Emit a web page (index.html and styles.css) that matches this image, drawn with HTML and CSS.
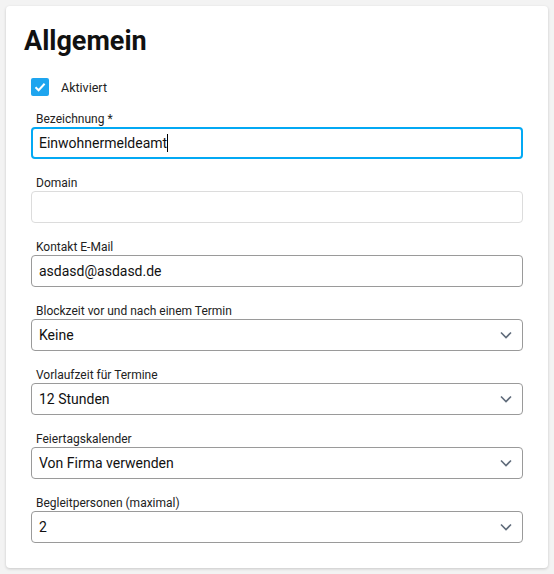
FILE: index.html
```html
<!DOCTYPE html>
<html lang="de">
<head>
<meta charset="utf-8">
<link rel="stylesheet" href="styles.css">
</head>
<body>
<div class="card">
  <h1 class="title">Allgemein</h1>
  <div class="form">
    <label class="check">
      <span class="box"><svg width="14" height="14" viewBox="0 0 14 14"><path d="M2.5 7.2 L5.6 10.2 L11.6 3.8" fill="none" stroke="#fff" stroke-width="2"/></svg></span>
      <span class="check-label">Aktiviert</span>
    </label>
    <div class="field">
      <div class="label">Bezeichnung *</div>
      <div class="input focus">Einwohnermeldeamt<span class="caret"></span></div>
    </div>
    <div class="field">
      <div class="label">Domain</div>
      <div class="input light"></div>
    </div>
    <div class="field">
      <div class="label">Kontakt E-Mail</div>
      <div class="input">asdasd@asdasd.de</div>
    </div>
    <div class="field">
      <div class="label">Blockzeit vor und nach einem Termin</div>
      <div class="input select">Keine<svg class="chev" width="12" height="8" viewBox="0 0 12 8"><path d="M1 1.5 L6 6.5 L11 1.5" fill="none" stroke="#5f6b7a" stroke-width="1.6"/></svg></div>
    </div>
    <div class="field">
      <div class="label">Vorlaufzeit für Termine</div>
      <div class="input select">12 Stunden<svg class="chev" width="12" height="8" viewBox="0 0 12 8"><path d="M1 1.5 L6 6.5 L11 1.5" fill="none" stroke="#5f6b7a" stroke-width="1.6"/></svg></div>
    </div>
    <div class="field">
      <div class="label">Feiertagskalender</div>
      <div class="input select">Von Firma verwenden<svg class="chev" width="12" height="8" viewBox="0 0 12 8"><path d="M1 1.5 L6 6.5 L11 1.5" fill="none" stroke="#5f6b7a" stroke-width="1.6"/></svg></div>
    </div>
    <div class="field">
      <div class="label">Begleitpersonen (maximal)</div>
      <div class="input select">2<svg class="chev" width="12" height="8" viewBox="0 0 12 8"><path d="M1 1.5 L6 6.5 L11 1.5" fill="none" stroke="#5f6b7a" stroke-width="1.6"/></svg></div>
    </div>
  </div>
</div>
</body>
</html>
```
FILE: styles.css
```css
html, body {
  margin: 0;
  padding: 0;
  background: #f3f3f3;
}
body {
  padding: 6px;
  font-family: Roboto, "Liberation Sans", sans-serif;
  color: #111;
}
.card {
  width: 542px;
  height: 562px;
  box-sizing: border-box;
  background: #fff;
  border-radius: 4px;
  box-shadow: 0 1px 3px rgba(0,0,0,0.18);
  padding-top: 17px;
}
.title {
  margin: 0 0 0 18px;
  font-size: 27px;
  font-weight: 700;
  line-height: 36px;
  color: #111;
}
.form {
  padding: 0 25px 0 25px;
}
.check {
  display: flex;
  align-items: center;
  margin-top: 19px;
  height: 18px;
}
.box {
  width: 18px;
  height: 18px;
  border-radius: 2px;
  background: #1ea5ef;
  display: flex;
  align-items: center;
  justify-content: center;
}
.check-label {
  margin-left: 12px;
  font-size: 12.5px;
  color: #222;
}
.field {
  margin-top: 15px;
}
.field + .field {
  margin-top: 16px;
}
.label {
  font-size: 12px;
  line-height: 16px;
  color: #222;
  padding-left: 5px;
}
.input {
  height: 32px;
  box-sizing: border-box;
  border: 1px solid #9a9a9a;
  border-radius: 4px;
  padding: 0 7px;
  font-size: 14px;
  display: flex;
  align-items: center;
  color: #111;
}
.input.focus {
  border: 2px solid #03a9f4;
  padding: 0 6px;
}
.input.light {
  border-color: #dcdcdc;
}
.caret {
  display: inline-block;
  width: 1px;
  height: 18px;
  background: #000;
}
.select {
  justify-content: space-between;
}
.chev {
  margin-right: 3px;
}
```
